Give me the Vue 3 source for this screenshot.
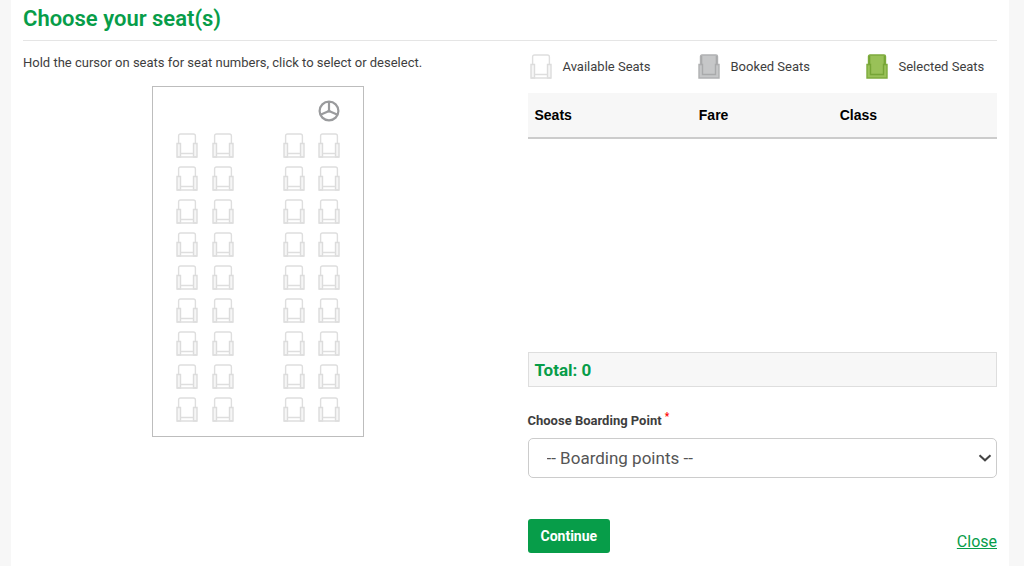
<script setup>
import { ref, computed } from 'vue'

const rows = 9
const columns = [1, 2, 4, 5]
const seats = []
for (let r = 1; r <= rows; r++) {
  columns.forEach((c, i) => seats.push({ id: (r - 1) * 4 + i + 1, column: c }))
}

const selected = ref([])
const boardingPoint = ref('')
const total = computed(() => selected.value.length * 0)

const legend = [
  { kind: 'available', label: 'Available Seats' },
  { kind: 'booked', label: 'Booked Seats' },
  { kind: 'chosen', label: 'Selected Seats' },
]

function toggle(id) {
  const at = selected.value.indexOf(id)
  if (at < 0) selected.value.push(id)
  else selected.value.splice(at, 1)
}
</script>

<template>
  <main class="page">
    <h1 class="title">Choose your seat(s)</h1>
    <div class="columns">
      <section class="left">
        <p class="hint">Hold the cursor on seats for seat numbers, click to select or deselect.</p>
        <div class="coach">
          <svg class="wheel" viewBox="0 0 22 22" aria-hidden="true">
            <circle cx="11" cy="11" r="9.4" />
            <path d="M11 2v9M11 11L3 14.5M11 11l8 3.5" />
            <circle class="hub" cx="11" cy="11" r="1.6" />
          </svg>
          <button
            v-for="seat in seats"
            :key="seat.id"
            type="button"
            class="seat"
            :class="['col' + seat.column, selected.includes(seat.id) ? 'chosen' : 'available']"
            :title="String(seat.id)"
            :aria-label="'Seat ' + seat.id"
            @click="toggle(seat.id)"
          >
            <svg class="chair" viewBox="0 0 22 25" aria-hidden="true">
              <path class="back" d="M2.6 10V3Q2.6 1 4.6 1H17.4Q19.4 1 19.4 3V10" />
              <path class="arm" d="M1 10.5H4.5V24H1ZM17.5 10.5H21V24H17.5Z" />
              <path class="base" d="M4.5 20.5H17.5M1 24H21" />
            </svg>
          </button>
        </div>
      </section>

      <section class="right">
        <ul class="legend">
          <li v-for="item in legend" :key="item.kind" :class="item.kind">
            <svg v-if="item.kind === 'available'" class="chair" viewBox="0 0 22 25" aria-hidden="true">
              <path class="back" d="M2.6 10V3Q2.6 1 4.6 1H17.4Q19.4 1 19.4 3V10" />
              <path class="arm" d="M1 10.5H4.5V24H1ZM17.5 10.5H21V24H17.5Z" />
              <path class="base" d="M4.5 20.5H17.5M1 24H21" />
            </svg>
            <svg v-else class="chair" viewBox="0 0 22 25" aria-hidden="true">
              <path class="body" d="M2.5 10.5V2.5Q2.5 1 4 1H18Q19.5 1 19.5 2.5V10.5H21V24H1V10.5Z" />
              <path class="edge" d="M3.6 10V2M18.4 10V2M2.5 10.5H4.5V20.5H17.5V10.5H19.5" />
            </svg>
            <span>{{ item.label }}</span>
          </li>
        </ul>

        <div class="fares">
          <table>
            <thead>
              <tr>
                <th class="c-seats">Seats</th>
                <th class="c-fare">Fare</th>
                <th>Class</th>
              </tr>
            </thead>
            <tbody>
              <tr v-for="id in selected" :key="id">
                <td>{{ id }}</td>
                <td>0</td>
                <td></td>
              </tr>
            </tbody>
          </table>
        </div>

        <div class="total">Total: {{ total }}</div>

        <label class="label" for="boarding">Choose Boarding Point <sup>*</sup></label>
        <div class="select">
          <select id="boarding" v-model="boardingPoint">
            <option value="">-- Boarding points --</option>
          </select>
          <svg viewBox="0 0 14 8" aria-hidden="true"><path d="M1.5 1.2L7 6.3L12.5 1.2" /></svg>
        </div>

        <div class="actions">
          <button type="button" class="continue">Continue</button>
          <a href="#" class="close">Close</a>
        </div>
      </section>
    </div>
  </main>
</template>

<style>
body {
  background: #f7f7f7;
}
</style>

<style scoped>
* {
  box-sizing: border-box;
}
.page {
  margin: 0 15px 0 11px;
  padding: 0 12px 12px;
  min-height: 100vh;
  background: #fff;
  color: #3e3e3e;
  font: 13px/20px Roboto, "Noto Sans", sans-serif;
}
.title {
  margin: 0;
  padding: 4px 0 6px;
  border-bottom: 1px solid #e5e5e5;
  color: #079d49;
  font-size: 22px;
  line-height: 30px;
  font-weight: 600;
}
.columns {
  display: grid;
  grid-template-columns: repeat(2, minmax(0, 1fr));
  gap: 35px;
}
.hint {
  margin: 0;
  padding: 12px 0 13px;
  white-space: nowrap;
}
.coach {
  display: grid;
  grid-template-columns: repeat(5, 1fr);
  grid-template-rows: 36px;
  grid-auto-rows: 33px;
  justify-items: center;
  width: 212px;
  margin: 0 auto;
  padding: 6px 16px 10px 17px;
  border: 1px solid #bdbdbd;
}
.wheel {
  grid-column: 5;
  align-self: center;
  width: 22px;
  height: 22px;
  fill: none;
  stroke: #9a9b9d;
  stroke-width: 2.2;
}
.wheel .hub {
  fill: #9a9b9d;
  stroke: none;
}
.seat {
  padding: 0;
  border: 0;
  background: none;
  cursor: pointer;
  display: flex;
  align-items: center;
}
.col1 { grid-column: 1; }
.col2 { grid-column: 2; }
.col4 { grid-column: 4; }
.col5 { grid-column: 5; }
.chair {
  display: block;
  width: 22px;
  height: 25px;
  stroke-width: 1.4;
  fill: none;
}
.available .back,
.available .base { stroke: #dedede; }
.available .arm { fill: #f6f6f6; stroke: #dcdcdc; }
.booked .body { fill: #c6c7c8; stroke: #b0b1b2; }
.booked .edge { stroke: #a9aaab; }
.chosen .body { fill: #99c158; stroke: #7dab3c; }
.chosen .edge { stroke: #76a536; }
.seat.chosen .arm { fill: #99c158; }
.seat.chosen .back { fill: #99c158; stroke: #7dab3c; }
.seat.chosen .arm,
.seat.chosen .base { stroke: #7dab3c; }
.legend {
  display: grid;
  grid-template-columns: 168px 168px auto;
  margin: 0;
  padding: 12px 0 13px 2px;
  list-style: none;
}
.legend li {
  display: flex;
  align-items: center;
  gap: 11px;
  height: 27px;
  white-space: nowrap;
}
.legend .chair {
  flex: none;
}
.fares {
  height: 259px;
  overflow: auto;
}
table {
  width: 100%;
  border-collapse: collapse;
}
th {
  padding: 13px 7px 12px;
  border-bottom: 2px solid #ccc;
  background: #f7f7f7;
  color: #000;
  font: 700 14px/19px "Liberation Sans", Arial, sans-serif;
  text-align: left;
}
td {
  padding: 6px 7px;
}
.c-seats { width: 35%; }
.c-fare { width: 30%; }
.total {
  padding: 5px 6px 4px;
  border: 1px solid #dedede;
  background: #f7f7f7;
  color: #079d49;
  font-size: 17px;
  line-height: 24px;
  font-weight: 700;
}
.label {
  display: block;
  padding: 24px 0 7px;
  font-weight: 700;
}
.label sup {
  color: #f00;
  font-size: 10px;
  line-height: 0;
}
.select {
  position: relative;
}
.select select {
  display: block;
  width: 100%;
  height: 40px;
  padding: 0 36px 0 18px;
  border: 1px solid #ccc;
  border-radius: 5px;
  appearance: none;
  background: #fff;
  color: #555;
  font: 17px Roboto, "Noto Sans", sans-serif;
}
.select svg {
  position: absolute;
  right: 5px;
  top: 16px;
  width: 14px;
  height: 8px;
  fill: none;
  stroke: #444;
  stroke-width: 2;
  pointer-events: none;
}
.actions {
  display: flex;
  justify-content: space-between;
  align-items: flex-end;
  padding-top: 41px;
}
.continue {
  height: 34px;
  padding: 0 13px;
  border: 0;
  border-radius: 3px;
  background: #079d49;
  color: #fff;
  font: 700 14px/20px Roboto, "Noto Sans", sans-serif;
}
.close {
  color: #079d49;
  font-size: 16px;
  line-height: 22px;
}
</style>
